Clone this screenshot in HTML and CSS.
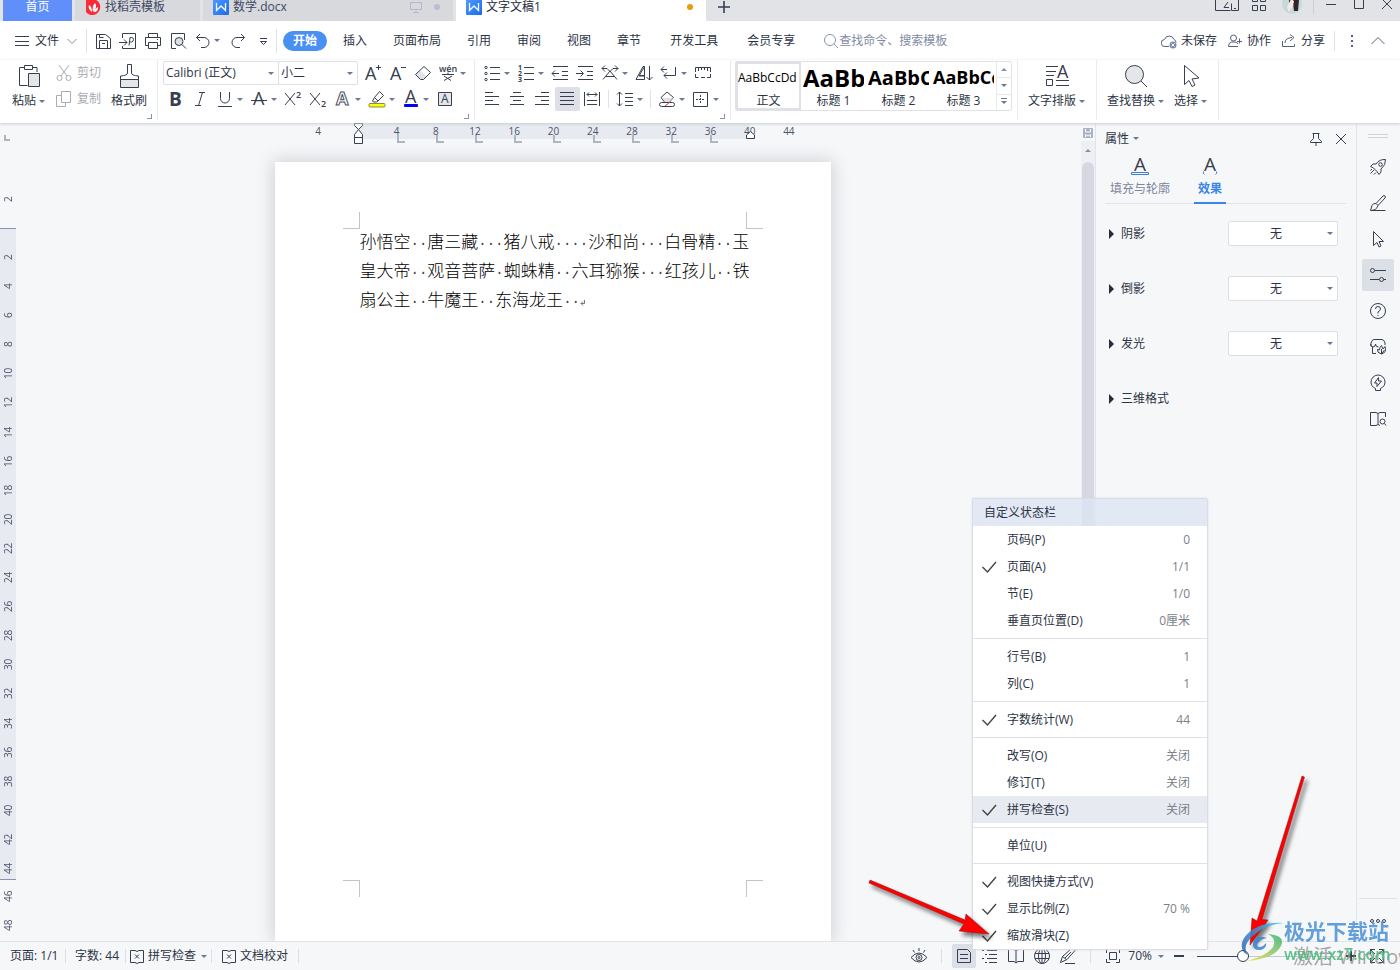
FILE: index.html
```html
<!DOCTYPE html>
<html lang="zh-CN">
<head>
<meta charset="utf-8">
<title>文字文稿1</title>
<link rel="stylesheet" href="styles.css">
</head>
<body>
<svg class="sprite" aria-hidden="true">
  <defs>
    <linearGradient id="wps" x1="0" y1="0" x2="1" y2="1"><stop offset="0" stop-color="#4f9bff"/><stop offset="1" stop-color="#1a6bec"/></linearGradient>
    <symbol id="wlogo" viewBox="0 0 16 16"><rect width="16" height="16" rx="1" fill="url(#wps)" stroke="none"/><path d="M3.500 4v7.500L8 7l4.500 4.500V4" fill="none" stroke="#fff" stroke-width="1.3"/></symbol>
    <symbol id="check" viewBox="0 0 16 14"><path d="M1.500 7l5 5L15 2" stroke="#444" stroke-width="1.4"/></symbol>
    <symbol id="cursor" viewBox="0 0 20 20"><path d="M5.500 2.500v14l3.500-3 2 4.500 2-1-2-4.500h4.500z"/></symbol>
    <symbol id="proof" viewBox="0 0 16 16"><path d="M6 2.500H1.500v12H6l2 1 2-1h4.500v-12H10l-2 1zM6 6.500l4 4M10 6.500l-4 4"/></symbol>
  </defs>
</svg>

<header class="tabbar">
  <button class="tab home">首页</button>
  <button class="tab docer"><svg class="i16" viewBox="0 0 16 16"><path d="M1 0h6a8 8 0 1 1-6 13z" fill="#fb2b3a" stroke="none"/><path d="M7 13C4 11 3 8 4 6c2 1 3 4 3 7zM8 13c-1-4 0-7 2-9 2 3 1 6-2 9zM9 13c1-3 2-4 4-5 0 3-1 5-4 5z" fill="#fff" stroke="none"/></svg>找稻壳模板</button>
  <button class="tab doc"><svg class="i16"><use href="#wlogo"/></svg>数学.docx<span class="tab-end"><svg class="i12" viewBox="0 0 12 12"><path d="M.5 1.500h11v7H.5zM6 8.500v3M3 11.500h6" stroke="#b3b9c9"/></svg><i class="dot"></i></span></button>
  <button class="tab doc current"><svg class="i16"><use href="#wlogo"/></svg>文字文稿1<i class="dot unsaved"></i></button>
  <button class="newtab" aria-label="新建"><svg class="i14" viewBox="0 0 14 14"><path d="M7 1v12M1 7h12" stroke-width="1.6"/></svg></button>
  <div class="window-tools">
    <svg class="i24" viewBox="0 0 24 14"><path d="M.5 0v13.500h15M16.500 6.500v7h7v-13M9 10.500h5M13 5l-4 5.500M19 11.500h2"/></svg>
    <svg class="i14" viewBox="0 0 14 14"><path d="M.5.5h5v4h-5zM8.500.5h5v4h-5zM.5 8.500h5v5h-5zM8.500 8.500h5v5h-5z"/></svg>
    <svg class="avatar" viewBox="0 0 20 20"><circle cx="10" cy="10" r="10" fill="#c4dad9" stroke="none"/><path d="M7 2q7-4 10 4l-1 11h-4l-1-8-4 2z" fill="#32242b" stroke="none"/><path d="M9 5l3 2-1 5-4 6-2-5z" fill="#f5e7e5" stroke="none"/></svg>
    <i class="wsep"></i>
    <button aria-label="最小化"><svg class="i12" viewBox="0 0 12 12"><path d="M1 6.500h10"/></svg></button>
    <button aria-label="最大化"><svg class="i12" viewBox="0 0 12 12"><path d="M1.500.5h9v10h-9z"/></svg></button>
    <button aria-label="关闭"><svg class="i12" viewBox="0 0 12 12"><path d="M1 1l10 10M11 1L1 11"/></svg></button>
  </div>
</header>

<nav class="menubar">
  <button class="file"><svg class="i16" viewBox="0 0 16 16"><path d="M1 3.500h14M1 8.500h14M1 12.500h14"/></svg>文件<svg class="i12 dim" viewBox="0 0 12 12"><path d="M1.500 4L6 8.500 10.500 4"/></svg></button>
  <i class="msep"></i>
  <div class="quick">
    <button aria-label="保存"><svg class="i20" viewBox="0 0 20 20"><path d="M3.500 3.500h9l5 4v10h-14zM6.500 17V9.500h8V17M6.500 3.500v3h4M9 12.500h3"/></svg></button>
    <button aria-label="输出为PDF"><svg class="i20" viewBox="0 0 20 20"><path d="M4.500 7V2.500h13v15h-13V15M1 11.500h8M6 8.500l3 3-3 3M11 14.500l1-8h1.500q2 0 2 2t-2 2.500H12"/></svg></button>
    <button aria-label="打印"><svg class="i20" viewBox="0 0 20 20"><path d="M5.500 6.500v-4h9v4M5 14.500H2.500v-8h15v8H15M5.500 11.500h9v6h-9zM14 8.500h1"/></svg></button>
    <button aria-label="打印预览"><svg class="i20" viewBox="0 0 20 20"><path d="M8 17.500H3.500v-15h13V9"/><circle cx="11" cy="10.500" r="4" fill="#dcdfe4"/><path d="M14 13.500l4 4"/></svg></button>
    <button class="with-caret" aria-label="撤销"><svg class="i20" viewBox="0 0 20 20"><path d="M7 3L3.500 6.500 7 10M3.500 6.500H11a5 5 0 0 1 0 10H8"/></svg><i class="caret"></i></button>
    <button aria-label="恢复"><svg class="i20" viewBox="0 0 20 20"><path d="M13 3l3.500 3.500L13 10M16.500 6.500H9a5 5 0 0 0 0 10h3"/></svg></button>
    <button aria-label="自定义快速访问"><svg class="i20" viewBox="0 0 20 20"><path d="M7 7.500h7M7.500 10.500l3 3 3-3z"/></svg></button>
  </div>
  <i class="msep"></i>
  <div class="ribbon-tabs">
    <button class="on">开始</button><button>插入</button><button>页面布局</button><button>引用</button><button>审阅</button><button>视图</button><button>章节</button><button class="wide">开发工具</button><button class="wide">会员专享</button>
  </div>
  <label class="search"><svg class="i16" viewBox="0 0 16 16"><circle cx="7" cy="7" r="5.500"/><path d="M11 11l4 4"/></svg><input type="text" placeholder="查找命令、搜索模板" aria-label="查找命令、搜索模板"></label>
  <div class="account">
    <button><svg class="i16" viewBox="0 0 16 16"><path d="M8 13.500H4a3.500 3.500 0 0 1-.5-7 5 5 0 0 1 9.500 0 3 3 0 0 1 2 3"/><circle cx="12" cy="12" r="3.500" fill="#7d8baa" stroke="none"/><path d="M10.500 10.500l3 3M13.500 10.500l-3 3" stroke="#fff"/></svg>未保存</button>
    <button><svg class="i16" viewBox="0 0 16 16"><circle cx="6.500" cy="5" r="3"/><path d="M11 13.500H1.500q0-4 3-4.500H8q2 0 3 2M12.500 5.500v5M10 8.500h5"/></svg>协作</button>
    <button><svg class="i16" viewBox="0 0 16 16"><path d="M1.500 8v5.500h12V11M4 10q0-5 7-5.500M9 1.500l4 3-4 3.500"/></svg>分享</button>
    <i class="msep"></i>
    <button aria-label="更多"><svg class="i16" viewBox="0 0 16 16"><path d="M8 2v2M8 7v2M8 12v2" stroke-width="2"/></svg></button>
    <button aria-label="收起功能区"><svg class="i16" viewBox="0 0 16 16"><path d="M1.500 11L8 4.500 14.500 11"/></svg></button>
  </div>
</nav>

<section class="ribbon">
  <div class="group clip">
    <button class="big"><svg class="i24" viewBox="0 0 24 24"><path d="M8 3.500H2.500v18h8M15 3.500h5V8M7.500 1.500h8v4h-8z"/><path d="M11.500 9.500h11v13h-11z" fill="#e4e6ea"/></svg><span>粘贴<i class="caret"></i></span></button>
    <div class="stack">
      <button class="off"><svg class="i16" viewBox="0 0 16 16"><path d="M3 0l8 11M13 0L5 11"/><circle cx="3.500" cy="13" r="2.500"/><circle cx="12.500" cy="13" r="2.500"/></svg>剪切</button>
      <button class="off"><svg class="i16" viewBox="0 0 16 16"><path d="M5.500.5h9v11h-9zM5 4.500H.5v11h9V12"/></svg>复制</button>
    </div>
    <button class="big"><svg class="i24" viewBox="0 0 24 24"><path d="M10.500.5h4V9q0 2.500 7 3v4h-18v-4q7-.5 7-3z"/><path d="M3.500 15.500h18v8h-18z" fill="#e4e6ea"/></svg><span>格式刷</span></button>
    <i class="corner"></i>
  </div>

  <div class="group font">
    <div class="row">
      <span class="sel fam"><select aria-label="字体"><option>Calibri (正文)</option></select></span><span class="sel size"><select aria-label="字号"><option>小二</option></select></span>
      <button class="ib" aria-label="增大字号"><svg class="i20" viewBox="0 0 20 20"><text class="la" x="2" y="17">A</text><path d="M13 4.500h5M15.500 2v5"/></svg></button>
      <button class="ib" aria-label="减小字号"><svg class="i20" viewBox="0 0 20 20"><text class="la" x="2" y="17">A</text><path d="M13 4.500h5"/></svg></button>
      <button class="ib" aria-label="清除格式"><svg class="i20" viewBox="0 0 20 20"><path d="M7.500 7.500l6 6-3 3h-3l-5-5z" fill="#e0e2e7" stroke="none"/><path d="M2.500 11.500l8.500-8 6.500 6-7 7h-3z"/></svg></button>
      <button class="ib pair" aria-label="拼音指南"><svg class="i20" viewBox="0 0 20 20"><text x="1" y="9" class="tiny">wén</text><path d="M4 11.500h12M6 13l7 4.500M14 13l-8 4.500M10 9.500v2"/></svg><i class="caret"></i></button>
    </div>
    <div class="row">
      <button class="ib" aria-label="加粗"><svg class="i20" viewBox="0 0 20 20"><text class="bb" x="4" y="17">B</text></svg></button>
      <button class="ib" aria-label="倾斜"><svg class="i20" viewBox="0 0 20 20"><path d="M9 3.500h6M5 16.500h6M12.500 3.500l-4 13"/></svg></button>
      <button class="ib pair" aria-label="下划线"><svg class="i20" viewBox="0 0 20 20"><path d="M5.500 3v6.500a4.500 4.500 0 0 0 9 0V3M3 17.500h14"/></svg><i class="caret"></i></button>
      <button class="ib pair" aria-label="删除线"><svg class="i20" viewBox="0 0 20 20"><text class="la" x="4" y="16">A</text><path d="M2 11.500h16"/></svg><i class="caret"></i></button>
      <button class="ib" aria-label="上标"><svg class="i20" viewBox="0 0 20 20"><path d="M2 4l10 12M12 4L2 16"/><text x="13" y="9" class="tiny">2</text></svg></button>
      <button class="ib" aria-label="下标"><svg class="i20" viewBox="0 0 20 20"><path d="M2 4l10 12M12 4L2 16"/><text x="13" y="18" class="tiny">2</text></svg></button>
      <button class="ib pair" aria-label="文字效果"><svg class="i20" viewBox="0 0 20 20"><text class="hollow" x="3" y="16">A</text></svg><i class="caret"></i></button>
      <button class="ib pair" aria-label="突出显示"><svg class="i20" viewBox="0 0 20 20"><path d="M7.500 8.500l5-6 4 4-5.500 5.500zM7.500 8.500l-2 3.500 1 1h3l1.500-1"/><rect x="2" y="14.500" width="16" height="3.500" rx="1" fill="#ff0" stroke="#8a8a50"/></svg><i class="caret"></i></button>
      <button class="ib pair" aria-label="字体颜色"><svg class="i20" viewBox="0 0 20 20"><text class="la" x="4" y="14">A</text><rect x="3" y="15" width="14" height="3" rx="1" fill="#00f" stroke="none"/></svg><i class="caret"></i></button>
      <button class="ib" aria-label="字符底纹"><svg class="i20" viewBox="0 0 20 20"><path d="M3.500 3.500h13v13h-13z" fill="#e4e6ea"/><text class="sa" x="6" y="14">A</text></svg></button>
    </div>
    <i class="corner"></i>
  </div>

  <div class="group para">
    <div class="row">
      <button class="ib pair" aria-label="项目符号"><svg class="i20" viewBox="0 0 20 20"><path d="M8 4.500h10M8 10.500h10M8 16.500h10"/><circle cx="4" cy="4.500" r="1.200"/><circle cx="4" cy="10.500" r="1.200"/><circle cx="4" cy="16.500" r="1.200"/></svg><i class="caret"></i></button>
      <button class="ib pair" aria-label="编号"><svg class="i20" viewBox="0 0 20 20"><path d="M8 4.500h10M8 10.500h10M8 16.500h10"/><text class="mini" x="2" y="7">1</text><text class="mini" x="2" y="13">2</text><text class="mini" x="2" y="19">3</text></svg><i class="caret"></i></button>
      <button class="ib" aria-label="减少缩进"><svg class="i20" viewBox="0 0 20 20"><path d="M3 3.500h15M12 8.500h6M12 12.500h6M3 16.500h15M2 10.500h7M5 7.500l-3 3 3 3"/></svg></button>
      <button class="ib" aria-label="增加缩进"><svg class="i20" viewBox="0 0 20 20"><path d="M3 3.500h15M12 8.500h6M12 12.500h6M3 16.500h15M1 10.500h7M5.500 7.500l3 3-3 3"/></svg></button>
      <button class="ib pair" aria-label="中文版式"><svg class="i20" viewBox="0 0 20 20"><path d="M3 16.500L10 8l7 8.500M5 13.500h10M2 5.500h5l3 3 3-3h5M5 2.500l-3 3 3 3M15 2.500l3 3-3 3"/></svg><i class="caret"></i></button>
      <button class="ib" aria-label="排序"><svg class="i20" viewBox="0 0 20 20"><path d="M10.500 3.500v9.500H5zM10.500 3.500H9l-7 13h8.500V13" /><path d="M5 12.500h5M15.500 3v14M12.500 14l3 3 3-3"/></svg></button>
      <button class="ib pair" aria-label="显示编辑标记"><svg class="i20" viewBox="0 0 20 20"><path d="M2 6.500h6M5 3.500l-3 3 3 3M16.500 4v8.500H5M8 9.500l-3 3 3 3"/></svg><i class="caret"></i></button>
      <button class="ib" aria-label="制表位"><svg class="i20" viewBox="0 0 20 20"><path d="M2.500 9V4.500h15V9M5.500 4v4M8.500 4v3M11.500 4v3M14.500 4v4M2.500 11v3.500h3M8 14.500h4M14 14.500h3.500V11"/></svg></button>
    </div>
    <div class="row">
      <button class="ib" aria-label="左对齐"><svg class="i20" viewBox="0 0 20 20"><path d="M3 3.500h8M3 7.500h14M3 11.500h8M3 15.500h14"/></svg></button>
      <button class="ib" aria-label="居中"><svg class="i20" viewBox="0 0 20 20"><path d="M6 3.500h8M3 7.500h14M6 11.500h8M3 15.500h14"/></svg></button>
      <button class="ib" aria-label="右对齐"><svg class="i20" viewBox="0 0 20 20"><path d="M9 3.500h8M3 7.500h14M9 11.500h8M3 15.500h14"/></svg></button>
      <button class="ib pressed" aria-label="两端对齐"><svg class="i20" viewBox="0 0 20 20"><path d="M3 3.500h14M3 7.500h14M3 11.500h14M3 15.500h14"/></svg></button>
      <button class="ib" aria-label="分散对齐"><svg class="i20" viewBox="0 0 20 20"><path d="M2.500 3v14M17.500 3v14M5 5.500h10M7 3.500l-2 2 2 2M13 3.500l2 2-2 2M5 11.500h10M5 15.500h10"/></svg></button>
      <i class="rsep"></i>
      <button class="ib pair" aria-label="行距"><svg class="i20" viewBox="0 0 20 20"><path d="M4.500 3v14M2 5.500L4.500 3 7 5.500M2 14.500L4.500 17 7 14.500M10 4.500h8M10 8.500h8M10 12.500h8M10 16.500h8"/></svg><i class="caret"></i></button>
      <i class="rsep"></i>
      <button class="ib pair" aria-label="底纹颜色"><svg class="i20" viewBox="0 0 20 20"><path d="M4 8.500L10 3l6.500 5.500-4 4.500h-5z"/><path d="M5 9h11l-4 4H8z" fill="#dfe1e6" stroke="none"/><rect x="2.500" y="13.500" width="15" height="4" rx="2" fill="#fff"/><path d="M8 17l5-4" stroke="#e33"/></svg><i class="caret"></i></button>
      <button class="ib pair" aria-label="边框"><svg class="i20" viewBox="0 0 20 20"><path d="M2.500 3.500h14v14h-14z"/><path d="M9.500 6v9M5 10.500h9" stroke-dasharray="2 1"/></svg><i class="caret"></i></button>
    </div>
    <i class="corner"></i>
  </div>

  <div class="group styles">
    <div class="gallery">
      <button class="style picked"><b class="s0">AaBbCcDd</b><span>正文</span></button>
      <button class="style"><b class="s1">AaBb</b><span>标题 1</span></button>
      <button class="style"><b class="s2">AaBbC</b><span>标题 2</span></button>
      <button class="style"><b class="s3">AaBbCc</b><span>标题 3</span></button>
      <div class="spin">
        <button aria-label="上一行"><i class="caret up"></i></button>
        <button aria-label="下一行"><i class="caret"></i></button>
        <button aria-label="更多样式"><i class="caret lined"></i></button>
      </div>
    </div>
  </div>

  <div class="group tall"><button class="big"><svg class="i24" viewBox="0 0 24 24"><path d="M1 2.500h12M1 7.500h10M1 11.500h8M1.500 15.500h6v6h-6zM11 16.500h13M11 21.500h13"/><text class="xa" x="12" y="14">A</text></svg><span>文字排版<i class="caret"></i></span></button></div>
  <div class="group tall find">
    <button class="big"><svg class="i24" viewBox="0 0 24 24"><circle cx="10.500" cy="10.500" r="9" fill="#e4e6ea"/><path d="M17 17l6 6"/></svg><span>查找替换<i class="caret"></i></span></button>
    <button class="big"><svg class="i24" viewBox="0 0 24 24"><path d="M5.500 1.500v19l4.500-4 3 6 3-1.500-3-6 7-1z"/></svg><span>选择<i class="caret"></i></span></button>
  </div>
</section>

<main class="work">
  <div class="vruler">
    <i class="tabstop"></i>
    <ol class="before"><li>2</li></ol>
    <div class="zone"><ol><li>2</li><li>4</li><li>6</li><li>8</li><li>10</li><li>12</li><li>14</li><li>16</li><li>18</li><li>20</li><li>22</li><li>24</li><li>26</li><li>28</li><li>30</li><li>32</li><li>34</li><li>36</li><li>38</li><li>40</li><li>42</li><li>44</li></ol></div>
    <ol class="after"><li>46</li><li>48</li></ol>
  </div>

  <div class="canvas">
    <div class="column">
      <div class="hruler">
        <ol><li class="plain">4</li><li class="origin"><svg viewBox="0 0 10 22"><path d="M.5.5h8v2l-4 4 4 5v3h-8v-3l4-5-4-4zM.5 14.500h8v6h-8z" fill="#fff"/></svg></li><li>4</li><li>8</li><li>12</li><li>16</li><li>20</li><li>24</li><li>28</li><li>32</li><li>36</li><li class="end">40<svg viewBox="0 0 10 8"><path d="M.5 7.500h8V4l-4-3.500L.5 4z" fill="#fff"/></svg></li><li class="plain">44</li></ol>
      </div>
      <article class="page">
        <i class="crop tl"></i><i class="crop tr"></i><i class="crop bl"></i><i class="crop br"></i>
        <p>孙悟空<s>··</s>唐三藏<s>···</s>猪八戒<s>····</s>沙和尚<s>···</s>白骨精<s>··</s>玉<br>皇大帝<s>··</s>观音菩萨<s>·</s>蜘蛛精<s>··</s>六耳猕猴<s>···</s>红孩儿<s>··</s>铁<br>扇公主<s>··</s>牛魔王<s>··</s>东海龙王<s>··</s><svg class="pilcrow" viewBox="0 0 6 6"><path d="M4.500 0v3.500H1M3 1.500l-2 2 2 2"/></svg></p>
      </article>
    </div>
  </div>

  <div class="scroll">
    <svg viewBox="0 0 12 12"><rect x="1" y="1" width="10" height="10" rx="1" fill="#aab2c6" stroke="none"/><path d="M3.500 2v3h5V2M3.500 10V7.500L6 9l2.500-1.500V10" stroke="#fff"/></svg>
    <div class="track"><i class="caret up"></i><div class="thumb"></div></div>
  </div>

  <aside class="pane">
    <div class="pane-head"><button>属性<i class="caret"></i></button><span class="spacer"></span>
      <button aria-label="固定"><svg class="i14" viewBox="0 0 14 14"><path d="M3.500 1.500h7M4.500 1.500v5l-3 3v1h11v-1l-3-3v-5M7 10.500V14"/></svg></button>
      <button aria-label="关闭窗格"><svg class="i12" viewBox="0 0 12 12"><path d="M1 1l10 10M11 1L1 11"/></svg></button>
    </div>
    <div class="pane-tabs">
      <button><svg class="i20" viewBox="0 0 20 20"><text class="pa" x="4" y="15">A</text><path d="M1.500 16.500h17v2h-17z" stroke="#3a7de0"/></svg>填充与轮廓</button>
      <button class="on"><svg class="i20" viewBox="0 0 20 20"><text class="pa" x="4" y="15">A</text><path d="M3.500 15.500q-1 2 1 3M16.500 15.500q1 2-1 3" stroke="#3a7de0"/></svg>效果</button>
    </div>
    <div class="prop"><i class="tri"></i><label for="p1">阴影</label><span class="sel"><select id="p1"><option>无</option></select></span></div>
    <div class="prop"><i class="tri"></i><label for="p2">倒影</label><span class="sel"><select id="p2"><option>无</option></select></span></div>
    <div class="prop"><i class="tri"></i><label for="p3">发光</label><span class="sel"><select id="p3"><option>无</option></select></span></div>
    <div class="prop"><i class="tri"></i><span>三维格式</span></div>
  </aside>

  <nav class="rail">
    <i class="grip"></i>
    <button aria-label="快捷"><svg class="i20" viewBox="0 0 20 20"><path d="M17.500 2.500q-6-.5-9.500 4.500H5L2.500 9.500l3 1.500 3.500 3.500 2 3 2-2.500v-3q5-4 4.500-9.500zM6 13l-3.500 3.500M4 12l-1.500 1.500M8 15.500L6 17.500"/><circle cx="12.500" cy="7.500" r="1.800"/></svg></button>
    <button aria-label="样式"><svg class="i20" viewBox="0 0 20 20"><path d="M8 10.500L15 3q1-1 2 0t0 2l-7 7.500zM8 10.500q-3-.5-4 2l-1.500 5q6 0 7.500-5M3 17.500h14.500"/></svg></button>
    <button aria-label="选择"><svg class="i20"><use href="#cursor"/></svg></button>
    <button class="on" aria-label="属性"><svg class="i20" viewBox="0 0 20 20"><circle cx="4.500" cy="5.500" r="2"/><path d="M7 5.500h11M2 14.500h9M15.500 14.500H18"/><circle cx="13.500" cy="14.500" r="2"/></svg></button>
    <button aria-label="帮助"><svg class="i20" viewBox="0 0 20 20"><circle cx="10" cy="10" r="7.500"/><path d="M7.500 8q0-2.500 2.500-2.500T12.500 8q0 1.500-2.500 3v1.500M10 14v1"/></svg></button>
    <button aria-label="稻壳"><svg class="i20" viewBox="0 0 20 20"><path d="M8 16.500H4.500V10M3 9V6q1-3.500 3-3.500h8q2 0 3 3.500v2M2.500 7q0 3 2.500 3t2.500-3q0 3 3 3"/><path d="M13.500 17q-5-1.500-4-4.500l2 .5q0-3 2-4.500l1.500 3.500 2-2.500q2 6-3.500 7.500zM13.500 17v-5M13.500 17l3-4"/></svg></button>
    <button aria-label="灵感"><svg class="i20" viewBox="0 0 20 20"><path d="M7.500 15.500q-4.500-2-4.500-6.500a7 7 0 0 1 14 0q0 4.500-4.500 6.500v2h-5zM10.500 4.500L6.500 10H9v3.500L13.500 8H10.500z"/></svg></button>
    <button aria-label="查阅"><svg class="i20" viewBox="0 0 20 20"><path d="M12 16.500l-2-1-2 1H2.500v-13H8l2 1 2-1h5.500V8M10 4.500v11"/><circle cx="14.500" cy="12.500" r="2.500"/><path d="M16.500 14.500l1.500 2"/></svg></button>
    <span class="spacer"></span>
    <i class="line"></i>
    <button class="dots" aria-label="更多"><svg class="i20" viewBox="0 0 20 20"><circle cx="4" cy="8" r="1.500"/><circle cx="10" cy="8" r="1.500"/><circle cx="16" cy="8" r="1.500"/></svg></button>
  </nav>
</main>

<footer class="status">
  <span class="pg">页面: 1/1</span><span class="wc">字数: 44</span>
  <button class="sp"><svg class="i16"><use href="#proof"/></svg>拼写检查<i class="caret"></i></button>
  <button class="pr"><svg class="i16"><use href="#proof"/></svg>文档校对</button>
  <span class="spacer"></span>
  <div class="views">
    <button class="eye" aria-label="护眼模式"><svg class="i20" viewBox="0 0 20 20"><path d="M2 11.500q8-9 16 0-8 9-16 0zM10 2v3M4 4l1.500 2.500M16 4l-1.500 2.500"/><circle cx="10" cy="11.500" r="3"/><circle cx="10" cy="11.500" r="1"/></svg></button>
    <i class="vsep"></i>
    <button class="on" aria-label="页面视图"><svg class="i20" viewBox="0 0 20 20"><path d="M3.500 3.500h10l3 3v10h-13zM6 8.500h8M6 12.500h8"/></svg></button>
    <button aria-label="大纲视图"><svg class="i20" viewBox="0 0 20 20"><path d="M2 4.500h2M7 4.500h10M5 8.500h2M9 8.500h8M2 12.500h2M7 12.500h10M5 16.500h2M9 16.500h8"/></svg></button>
    <button aria-label="阅读版式"><svg class="i20" viewBox="0 0 20 20"><path d="M2.500 3.500H8l2 1 2-1h5.500v12H12l-2 1.500-2-1.500H2.500zM10 4.500v12"/></svg></button>
    <button aria-label="Web版式"><svg class="i20" viewBox="0 0 20 20"><circle cx="10" cy="10" r="7.500"/><ellipse cx="10" cy="10" rx="3.500" ry="7.500"/><path d="M10 2.500v15M3 7.500h14M3 12.500h14"/></svg></button>
    <button aria-label="写作模式"><svg class="i20" viewBox="0 0 20 20"><path d="M2.500 16.500l2-6L13 3q3-1 4 1.500L9 13.500zM4.500 10.500l4 3M13 6l-6 6M7 17.500h10"/></svg></button>
    <i class="vsep"></i>
  </div>
  <div class="zoom">
    <button aria-label="适合页面"><svg class="i16" viewBox="0 0 16 16"><path d="M1.500 5V1.500H5M11 1.500h3.500V5M14.500 11v3.500H11M5 14.500H1.500V11M4.500 4.500h7v7h-7z"/></svg></button>
    <button class="pct">70%<i class="caret"></i></button>
    <button aria-label="缩小"><svg class="i12" viewBox="0 0 12 12"><path d="M1 6h10" stroke-width="2"/></svg></button>
    <input type="range" min="0" max="100" value="31" aria-label="缩放滑块">
    <button aria-label="放大"><svg class="i12" viewBox="0 0 12 12"><path d="M1 6h10M6 1v10" stroke-width="2"/></svg></button>
    <button class="full" aria-label="全屏"><svg class="i16" viewBox="0 0 16 16"><path d="M1.500 6V1.500H6M10 1.500h4.500V6M14.500 10v4.500H10M6 14.500H1.500V10M1.500 1.500l4.500 4.500M14.500 1.500L10 6M14.500 14.500L10 10M1.500 14.500L6 10"/></svg></button>
  </div>
</footer>

<div class="popup" role="menu">
  <h2>自定义状态栏</h2>
  <button>页码(P)<em>0</em></button>
  <button><svg><use href="#check"/></svg>页面(A)<em>1/1</em></button>
  <button>节(E)<em>1/0</em></button>
  <button>垂直页位置(D)<em>0厘米</em></button>
  <hr>
  <button>行号(B)<em>1</em></button>
  <button>列(C)<em>1</em></button>
  <hr>
  <button><svg><use href="#check"/></svg>字数统计(W)<em>44</em></button>
  <hr>
  <button>改写(O)<em>关闭</em></button>
  <button>修订(T)<em>关闭</em></button>
  <button class="hover"><svg><use href="#check"/></svg>拼写检查(S)<em>关闭</em></button>
  <hr>
  <button>单位(U)</button>
  <hr>
  <button><svg><use href="#check"/></svg>视图快捷方式(V)</button>
  <button><svg><use href="#check"/></svg>显示比例(Z)<em>70 %</em></button>
  <button><svg><use href="#check"/></svg>缩放滑块(Z)</button>
</div>

<svg class="arrows" viewBox="0 0 540 205" aria-hidden="true">
  <g fill="#f00" stroke="#8c1010" stroke-width=".5">
    <path d="M10 115l95 40 1-6 23 20-30-3 5-7L9 118z"/>
    <path d="M442 11l-45 145-5-3-2 27 18-25-6-.5L444.500 12z"/>
  </g>
</svg>

<div class="activate">激活 Windows</div>
<div class="brand">
  <svg viewBox="0 0 46 42">
    <defs>
      <linearGradient id="b1" x1="0" y1="1" x2="1" y2="0"><stop offset="0" stop-color="#2c59b5"/><stop offset="1" stop-color="#45c3ee"/></linearGradient>
      <linearGradient id="b2" x1="0" y1="1" x2="1" y2="0"><stop offset="0" stop-color="#f2e04c"/><stop offset="1" stop-color="#37b27a"/></linearGradient>
    </defs>
    <path d="M44 2Q26 0 12 9C-2 19 0 31 8 34 2 26 8 18 18 11 26 5 34 3 44 2z" fill="url(#b1)" stroke="none"/>
    <path d="M28 13q18 1 13 12Q34 38 7 40q20-5 26-14 4-8-5-13z" fill="url(#b2)" stroke="none"/>
    <path d="M27 17q-12-4-14 5-1 8 8 7 6-2 5-7-2 3-6 4-4 0-2-4 3-4 9-5z" fill="#3c86cf" stroke="none"/>
  </svg>
  <div><strong>极光下载站</strong><span>www.xz7.com</span></div>
</div>
</body>
</html>
```
FILE: styles.css
```css
* { box-sizing: border-box; }
body {
  margin: 0;
  height: 100vh;
  overflow: hidden;
  position: relative;
  display: flex;
  flex-direction: column;
  font: 12px/16px "Open Sans", "Noto Sans CJK SC", sans-serif;
  color: #2b3344;
  background: #f6f7f9;
}
button, input, select {
  font: inherit;
  color: inherit;
  border: 0;
  margin: 0;
  padding: 0;
  background: none;
  outline: none;
}
button { display: flex; align-items: center; white-space: nowrap; flex: none; }
ol { list-style: none; margin: 0; padding: 0; }
svg { fill: none; stroke: #363e50; stroke-width: 1; flex: none; display: block; }
svg text { stroke: none; fill: #363e50; font-family: "Open Sans", sans-serif; }
.sprite { position: absolute; width: 0; height: 0; }
.i12 { width: 12px; height: 12px; }
.i14 { width: 14px; height: 14px; }
.i16 { width: 16px; height: 16px; }
.i20 { width: 20px; height: 20px; }
.i24 { width: 24px; height: 24px; }
.spacer { flex: 1; }
.caret {
  flex: none;
  width: 0;
  height: 0;
  border: 3px solid transparent;
  border-top: 3px solid #6b7893;
  border-bottom: 0;
}
.caret.up { border-top: 0; border-bottom: 3px solid #8490a8; }

/* document tabs */
.tabbar { display: flex; height: 21px; background: #e2e3e7; gap: 3px; padding-left: 3px; flex: none; overflow: hidden; }
.tab { height: 21px; padding: 0 10px 7px; background: #d8d9dd; line-height: 14px; gap: 4px; color: #3d4763; }
.tab.home { width: 69px; justify-content: center; background: #608ffa; color: #fff; }
.tab.docer { width: 125px; }
.tab.doc { width: 250px; }
.tab.current { background: #fff; color: #222a3a; }
.tab-end { margin-left: auto; display: flex; align-items: center; gap: 12px; padding-right: 3px; }
.dot { width: 6px; height: 6px; border-radius: 50%; background: #b9bed2; }
.unsaved { background: #ea9a0a; margin-left: auto; margin-right: 3px; }
.newtab { padding: 0 0 8px 8px; }
.window-tools { margin-left: auto; display: flex; align-items: center; padding: 0 7px 14px 0; height: 21px; gap: 16px; }
.window-tools > .i24 { height: 14px; margin-right: -3px; }
.avatar { width: 20px; height: 20px; margin-right: -5px; }
.wsep { width: 1px; height: 20px; background: #cccfd6; margin-right: -5px; }

/* menu row */
.menubar { display: flex; align-items: center; height: 39px; background: #fff; flex: none; padding-left: 14px; }
.file { gap: 5px; }
.file .dim { margin-left: 2px; stroke: #8a8f9a; }
.msep { width: 1px; height: 24px; background: #e0e2e6; flex: none; }
.file + .msep { margin-left: 8px; }
.quick { display: flex; gap: 5px; padding: 0 3px 0 6px; }
.quick .with-caret { width: 30px; gap: 1px; }
.quick + .msep { margin-right: 6px; }
.ribbon-tabs { display: flex; align-items: center; }
.ribbon-tabs button { padding: 0 13px; height: 20px; }
.ribbon-tabs .on { padding: 0 10px; border-radius: 10px; background: #4990f3; color: #fff; font-weight: 700; margin-right: 3px; }
.ribbon-tabs .wide { margin-left: 3px; }
.ribbon-tabs .wide + .wide { margin-left: 3px; }
.search { display: flex; align-items: center; margin-left: 15px; color: #7f8aa3; }
.search svg { stroke: #8a96b0; }
.search input { width: 130px; }
.search input::placeholder { color: #7f8aa3; opacity: 1; }
.account { margin-left: auto; display: flex; align-items: center; gap: 10px; padding-right: 14px; }
.account button { gap: 4px; }
.account svg { stroke: #55607a; }
.account .msep { margin: 0 -1px; height: 20px; }

/* ribbon */
.ribbon { display: flex; height: 63px; background: #fff; flex: none; box-shadow: 0 1px 3px #c9ccd2; position: relative; z-index: 1; }
.group { position: relative; height: 60px; border-right: 1px solid #ebecef; display: flex; flex: none; }
.corner { position: absolute; right: 5px; bottom: 1px; width: 5px; height: 5px; border: solid #8b93a5; border-width: 0 1px 1px 0; }
.clip { width: 158px; padding-left: 12px; gap: 11px; }
.big { flex-direction: column; gap: 5px; padding-top: 4px; height: 60px; }
.big span { display: flex; align-items: center; gap: 3px; }
.stack { display: flex; flex-direction: column; gap: 10px; padding-top: 5px; }
.stack + .big { margin-left: -1px; }
.stack button { gap: 5px; }
.off { color: #a9acb2; }
.off svg { stroke: #a9acb2; }
.font, .para { flex-direction: column; padding-left: 5px; padding-top: 1px; gap: 2px; }
.font { width: 317px; }
.para { width: 256px; }
.row { display: flex; align-items: center; height: 24px; }
.ib { width: 25px; height: 24px; padding-left: 2px; }
.ib.pair { width: 34px; gap: 2px; }
.pressed { background: #dde1e7; border-radius: 2px; }
.rsep { width: 1px; height: 18px; margin: 0 4px 0 3px; background: #e0e2e6; }
.sel { position: relative; display: block; height: 24px; border: 1px solid #dcdfe4; background: #fff; border-radius: 2px; }
.sel select { appearance: none; width: 100%; height: 100%; padding-left: 2px; }
.sel::after { content: ""; position: absolute; right: 4px; top: 10px; border: 3px solid transparent; border-top-color: #6b7893; border-bottom: 0; pointer-events: none; }
.fam { width: 116px; }
.size { width: 80px; margin: 0 3px 0 -1px; }
.la { font-size: 18px; font-weight: 400; }
.sa { font-size: 12px; }
.xa { font-size: 18px; font-weight: 400; }
.pa { font-size: 19px; font-weight: 400; }
.bb { font-size: 19px; font-weight: 700; }
.tiny { font-size: 9px; font-weight: 600; }
.mini { font-size: 7px; font-weight: 700; }
svg .hollow { font-size: 18px; font-weight: 700; fill: #fff; stroke: #4a5265; }
.styles { width: 287px; padding: 1px 0 0 4px; }
.gallery { display: flex; width: 277px; height: 50px; border: 1px solid #e0e2e7; border-radius: 2px; }
.style { width: 65px; flex-direction: column; overflow: hidden; padding: 0 2px; }
.style b { height: 31px; line-height: 31px; color: #000; width: 100%; overflow: hidden; text-align: left; }
.style.picked { box-shadow: 0 0 0 2px #dfe1e7 inset; }
.s0 { font-size: 12px; font-weight: 400; }
.s1 { font-size: 24px; }
.s2 { font-size: 20px; }
.s3 { font-size: 18px; }
.spin { flex: 1; display: flex; flex-direction: column; border-left: 1px solid #e8e9ed; }
.spin button { flex: 1; justify-content: center; border-bottom: 1px solid #e8e9ed; }
.spin button:last-child { border: 0; }
.lined { position: relative; }
.lined::before { content: ""; position: absolute; left: -3px; top: -6px; width: 6px; height: 1px; background: #6b7893; }
.tall { padding-left: 10px; width: 79px; }
.find { width: 122px; gap: 11px; }
.find .big + .big { margin-left: -1px; }

/* work area */
.work { flex: 1; min-height: 0; display: flex; }
.vruler { width: 16px; flex: none; overflow: hidden; font-size: 10px; line-height: 16px; }
.tabstop { display: block; width: 6px; height: 6px; margin: 12px 0 0 4px; border: solid #b0b5c2; border-width: 0 0 2px 2px; }
.vruler ol { display: flex; flex-direction: column; }
.vruler li { flex: 1; display: flex; align-items: center; justify-content: center; writing-mode: vertical-rl; transform: rotate(180deg); width: 16px; color: #4b5468; }
.before { height: 87px; padding: 44px 0 14px; }
.zone { height: 652px; padding-top: 14px; background: #e7eaf0; border: solid #8893ad; border-width: 1px 0; }
.zone ol { height: 640px; }
.after { height: 58px; margin-top: 2px; }
.canvas { flex: 1; min-width: 0; display: flex; justify-content: center; padding-left: 8px; overflow: hidden; }
.column { width: 556px; flex: none; display: flex; flex-direction: column; }
.hruler { height: 39px; flex: none; padding-left: 24px; background: linear-gradient(#e7eaf0, #e7eaf0) no-repeat 83px 0 / 392px 16px; }
.hruler ol { display: grid; grid-template-columns: repeat(13, 1fr); width: 510px; font-size: 10px; line-height: 16px; text-align: center; color: #4b5468; }
.hruler li { position: relative; height: 22px; }
.hruler li::after { content: ""; position: absolute; left: 50%; top: 12px; width: 6px; height: 6px; border: solid #b0b5c2; border-width: 0 0 2px 2px; }
.hruler .plain::after, .hruler .origin::after, .hruler .end::after { display: none; }
.hruler .end svg { position: absolute; left: 16px; top: 8px; width: 10px; height: 8px; }
.origin svg { width: 10px; height: 22px; margin-left: 16px; }
.page { position: relative; flex: 1; background: #fff; padding: 64px 80px 0 85px; box-shadow: 0 0 16px 2px #cfd1d5; }
.page p { margin: 0; font: 17px/29px "Noto Sans CJK SC", sans-serif; font-weight: 300; color: #000; white-space: nowrap; }
.page s { font: 14px/16px "Liberation Mono", monospace; text-decoration: none; color: #444; }
.pilcrow { display: inline-block; width: 6px; height: 6px; stroke: #777; }
.crop { position: absolute; width: 17px; height: 17px; border: 0 solid #c4c4c4; }
.tl { left: 68px; top: 50px; border-width: 0 1px 1px 0; }
.tr { right: 68px; top: 50px; border-width: 0 0 1px 1px; }
.bl { left: 68px; bottom: 44px; border-width: 1px 1px 0 0; }
.br { right: 68px; bottom: 44px; border-width: 1px 0 0 1px; }
.scroll { width: 14px; flex: none; display: flex; flex-direction: column; align-items: center; padding-top: 4px; }
.scroll > svg { width: 12px; height: 12px; }
.track { flex: 1; width: 14px; background: #edeff3; margin-top: 2px; display: flex; flex-direction: column; align-items: center; padding-top: 8px; }
.thumb { width: 12px; height: 480px; border-radius: 6px; background: #d5d8e1; margin-top: 10px; }

/* property pane */
.pane { width: 262px; flex: none; border: solid #e1e4ea; border-width: 0 1px; padding: 0 9px; }
.pane-head { display: flex; align-items: center; height: 31px; gap: 12px; }
.pane-head button { gap: 4px; }
.pane-tabs { display: flex; gap: 20px; height: 50px; border-bottom: 1px solid #e1e4e9; color: #7c869c; padding-left: 1px; margin-right: 1px; }
.pane-tabs button { flex-direction: column; height: 50px; padding: 2px 4px 0; gap: 5px; }
.pane-tabs .on { color: #3a85ea; font-weight: 700; border-bottom: 2px solid #3a85ea; }
.prop { display: flex; align-items: center; height: 55px; padding: 0 9px 0 4px; gap: 7px; }
.pane-tabs + .prop { margin-top: 2px; }
.tri { border: 5px solid transparent; border-left: 5px solid #252c3c; border-right: 0; }
.prop .sel { margin-left: auto; width: 110px; height: 25px; }
.prop select { text-align-last: center; padding: 0 14px 0 0; }

/* right rail */
.rail { width: 43px; flex: none; display: flex; flex-direction: column; align-items: center; gap: 4px; padding: 11px 2px 0 0; }
.rail button { width: 32px; height: 32px; justify-content: center; border-radius: 2px; }
.rail .on { background: #dbdfe6; }
.grip { width: 20px; height: 4px; border: solid #cfd2d8; border-width: 1px 0; margin-bottom: 9px; }
.line { width: 38px; height: 1px; background: #e0e2e7; }
.rail .dots { margin: 4px 0 2px; }

/* status bar */
.status { flex: none; height: 29px; display: flex; align-items: center; border-top: 1px solid #e0e3e8; padding-left: 1px; background: #f6f7f9; }
.status > span:not(.spacer), .status > button { height: 14px; line-height: 14px; border-right: 1px solid #dcdfe5; }
.pg { width: 65px; padding-left: 9px; }
.wc { width: 60px; padding-left: 9px; }
.sp { width: 86px; padding-left: 3px; gap: 3px; }
.sp .caret { margin-left: 2px; }
.pr { width: 87px; padding-left: 9px; gap: 3px; }
.views { display: flex; align-items: center; gap: 2px; }
.views button { width: 24px; height: 24px; justify-content: center; }
.views .on { background: #dbdfe6; border-radius: 2px; }
.vsep { width: 1px; height: 14px; background: #dcdfe5; margin: 0 8px; }
.zoom { display: flex; align-items: center; padding: 0 15px 0 6px; gap: 7px; }
.pct { gap: 6px; margin-right: 2px; }
.zoom input { appearance: none; width: 141px; height: 13px; margin: 0 0 0 5px; background: linear-gradient(90deg, #3a435c 30%, #c6cad4 30%) no-repeat 0 6px / 100% 1px; }
.zoom input::-webkit-slider-thumb { appearance: none; width: 12px; height: 12px; border: 1px solid #363e50; border-radius: 50%; background: #fff; }
.full { margin-left: 5px; }

/* status bar menu */
.popup { position: absolute; right: 192px; bottom: 20px; width: 236px; border: 1px solid #d8dde6; border-radius: 2px; background: linear-gradient(#dde5f3cc 27px, #fff 27px); box-shadow: 0 0 2px #d5d9e1; z-index: 3; }
.popup h2 { margin: 0; height: 27px; padding-left: 11px; font-size: 12px; line-height: 27px; font-weight: 400; }
.popup button { width: 100%; height: 27px; padding: 0 17px 0 34px; position: relative; }
.popup svg { position: absolute; left: 8px; top: 7px; width: 16px; height: 14px; }
.popup em { margin-left: auto; font-style: normal; color: #7b7f87; }
.popup hr { margin: 4px 0; border: 0; height: 1px; background: #dfe1e5; }
.popup .hover { background: #e7eaf0; }

/* annotations */
.arrows { position: absolute; right: 0; bottom: 0; width: 540px; height: 205px; z-index: 4; filter: drop-shadow(3px 4px 2px #0008); pointer-events: none; }
.activate { position: absolute; left: calc(100% - 107px); bottom: 0; font-size: 20px; line-height: 26px; white-space: nowrap; color: #7b7d80aa; z-index: 5; }
.brand { position: absolute; right: 10px; bottom: 6px; display: flex; align-items: flex-start; z-index: 6; opacity: .85; }
.brand svg { width: 46px; height: 42px; margin-top: 2px; }
.brand div { width: 106px; margin-left: -2px; }
.brand strong, .brand span { display: block; white-space: nowrap; }
.brand strong { font-size: 21px; line-height: 25px; color: #4a90d5; }
.brand span { font-size: 16px; line-height: 20px; font-weight: 600; color: #48b878; }
```
